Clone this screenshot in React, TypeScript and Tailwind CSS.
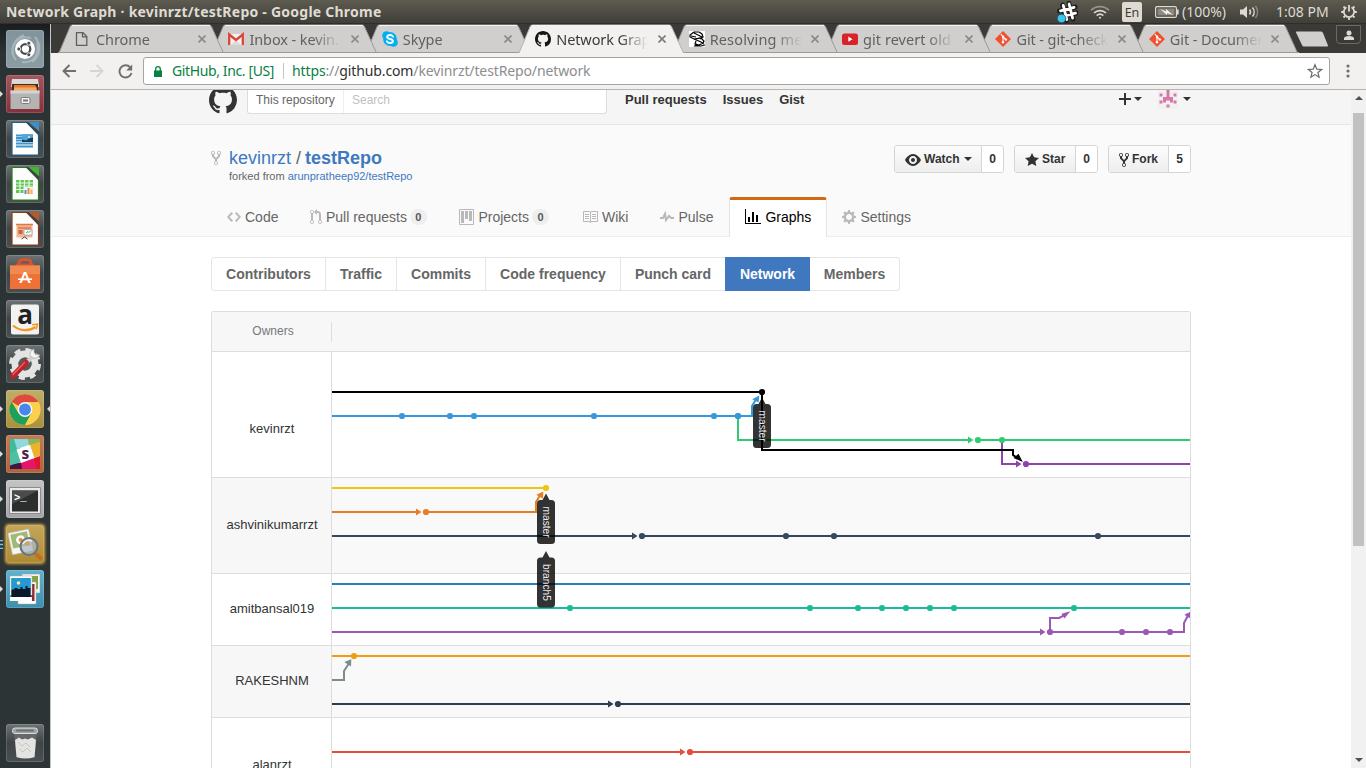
import type { ReactNode } from "react";

const UI = "font-['Noto_Sans','Open_Sans',sans-serif]";

const P = {
  fork: "M8 1a1.993 1.993 0 0 0-1 3.72V6L5 8 3 6V4.72A1.993 1.993 0 0 0 2 1a1.993 1.993 0 0 0-1 3.72V6.5l3 3v1.78A1.993 1.993 0 0 0 5 15a1.993 1.993 0 0 0 1-3.72V9.5l3-3V4.72A1.993 1.993 0 0 0 8 1zM2 4.2C1.34 4.2.8 3.65.8 3c0-.65.55-1.2 1.2-1.2.65 0 1.2.55 1.2 1.2 0 .65-.55 1.2-1.2 1.2zm3 10c-.66 0-1.2-.55-1.2-1.2 0-.65.55-1.2 1.2-1.2.65 0 1.2.55 1.2 1.2 0 .65-.55 1.2-1.2 1.2zm3-10c-.66 0-1.2-.55-1.2-1.2 0-.65.55-1.2 1.2-1.2.65 0 1.2.55 1.2 1.2 0 .65-.55 1.2-1.2 1.2z",
  eye: "M8.06 2C3 2 0 8 0 8s3 6 8.06 6C13 14 16 8 16 8s-3-6-7.94-6zM8 12c-2.2 0-4-1.78-4-4 0-2.2 1.8-4 4-4 2.22 0 4 1.8 4 4 0 2.22-1.78 4-4 4zm2-4c0 1.11-.89 2-2 2-1.11 0-2-.89-2-2 0-1.11.89-2 2-2 1.11 0 2 .89 2 2z",
  star: "M14 6l-4.9-.64L7 1 4.9 5.36 0 6l3.6 3.26L2.67 14 7 11.67 11.33 14l-.93-4.74z",
  code: "M9.5 3L8 4.5 11.5 8 8 11.5 9.5 13 14 8 9.5 3zm-5 0L0 8l4.5 5L6 11.5 2.5 8 6 4.5 4.5 3z",
  pr: "M11 11.28V5c-.03-.78-.34-1.47-.94-2.06C9.46 2.35 8.78 2.03 8 2H7V0L4 3l3 3V4h1c.27.02.48.11.69.31.21.2.3.42.31.69v6.28A1.993 1.993 0 0 0 10 15a1.993 1.993 0 0 0 1-3.72zm-1 2.92c-.66 0-1.2-.55-1.2-1.2 0-.65.55-1.2 1.2-1.2.65 0 1.2.55 1.2 1.2 0 .65-.55 1.2-1.2 1.2zM4 3c0-1.11-.89-2-2-2a1.993 1.993 0 0 0-1 3.72v6.56A1.993 1.993 0 0 0 2 15a1.993 1.993 0 0 0 1-3.72V4.72c.59-.34 1-.98 1-1.72zm-.8 10c0 .66-.55 1.2-1.2 1.2-.65 0-1.2-.55-1.2-1.2 0-.65.55-1.2 1.2-1.2.65 0 1.2.55 1.2 1.2zM2 4.2C1.34 4.2.8 3.65.8 3c0-.65.55-1.2 1.2-1.2.65 0 1.2.55 1.2 1.2 0 .65-.55 1.2-1.2 1.2z",
  project: "M10 12h3V2h-3v10zm-4-2h3V2H6v8zm-4 4h3V2H2v12zm-1 1h13V1H1v14zM14 0H1a1 1 0 0 0-1 1v14a1 1 0 0 0 1 1h13a1 1 0 0 0 1-1V1a1 1 0 0 0-1-1z",
  book: "M3 5h4v1H3V5zm0 3h4V7H3v1zm0 2h4V9H3v1zm11-5h-4v1h4V5zm0 2h-4v1h4V7zm0 2h-4v1h4V9zm2-6v9c0 .55-.45 1-1 1H9.5l-1 1-1-1H2c-.55 0-1-.45-1-1V3c0-.55.45-1 1-1h5.5l1 1 1-1H15c.55 0 1 .45 1 1zm-8 .5L7.5 3H2v9h6V3.5zm7-.5H9.5l-.5.5V12h6V3z",
  pulse: "M11.5 8L8.8 5.4 6.6 8.5 5.5 1.6 2.38 8H0v2h3.6l.9-1.8.9 5.4L9 8.5l1.6 1.5H14V8z",
  graph: "M16 14v1H0V0h1v14h15zM5 13H3V8h2v5zm4 0H7V3h2v10zm4 0h-2V6h2v7z",
  gear: "M14 8.77v-1.6l-1.94-.64-.45-1.09.88-1.84-1.13-1.13-1.81.91-1.09-.45-.69-1.92h-1.6l-.63 1.94-1.11.45-1.84-.88-1.13 1.13.91 1.81-.45 1.09L0 7.23v1.59l1.94.64.45 1.09-.88 1.84 1.13 1.13 1.81-.91 1.09.45.69 1.92h1.59l.63-1.94 1.11-.45 1.84.88 1.13-1.13-.92-1.81.47-1.09L14 8.75v.02zM7 11c-1.66 0-3-1.34-3-3s1.34-3 3-3 3 1.34 3 3-1.34 3-3 3z",
  github: "M8 0C3.58 0 0 3.58 0 8c0 3.54 2.29 6.53 5.47 7.59.4.07.55-.17.55-.38 0-.19-.01-.82-.01-1.49-2.01.37-2.53-.49-2.69-.94-.09-.23-.48-.94-.82-1.13-.28-.15-.68-.52-.01-.53.63-.01 1.08.58 1.23.82.72 1.21 1.87.87 2.33.66.07-.52.28-.87.51-1.07-1.78-.2-3.64-.89-3.64-3.95 0-.87.31-1.59.82-2.15-.08-.2-.36-1.02.08-2.12 0 0 .67-.21 2.2.82.64-.18 1.32-.27 2-.27.68 0 1.36.09 2 .27 1.53-1.04 2.2-.82 2.2-.82.44 1.1.16 1.92.08 2.12.51.56.82 1.27.82 2.15 0 3.07-1.87 3.75-3.65 3.95.29.25.54.73.54 1.48 0 1.07-.01 1.93-.01 2.2 0 .21.15.46.55.38A8.013 8.013 0 0 0 16 8c0-4.42-3.58-8-8-8z",
  plus: "M12 9H7v5H5V9H0V7h5V2h2v5h5z",
};

function Octicon({ d, w, size = 16, className = "" }: { d: string; w: number; size?: number; className?: string }) {
  return (
    <svg viewBox={`0 0 ${w} 16`} width={(w * size) / 16} height={size} className={`shrink-0 fill-current ${className}`}>
      <path fillRule="evenodd" d={d} />
    </svg>
  );
}

const Caret = ({ className = "" }: { className?: string }) => (
  <svg viewBox="0 0 8 4" className={`h-1 w-2 shrink-0 fill-current ${className}`}>
    <path d="M0 0h8L4 4z" />
  </svg>
);

/* ---------- desktop panel ---------- */

function TopPanel() {
  return (
    <div className={`flex h-6 shrink-0 items-center border-b border-[#2f2e2a] bg-linear-to-b from-[#5e5b50] to-[#3f3e39] text-[#dfdbd2] ${UI}`}>
      <div className="w-[1051px] pl-[6px] text-[14px] leading-6 font-bold tracking-[0.24px] whitespace-nowrap">
        Network Graph · kevinrzt/testRepo - Google Chrome
      </div>
      <svg viewBox="0 0 22 22" className="ml-[5px] h-[22px] w-[22px] shrink-0">
        <g transform="rotate(-14 12 11)" stroke="#1f1f1d" strokeWidth="5" strokeLinecap="round">
          <path d="M8.5 3v16M15 3v16M4 8h16M4 14h16" />
        </g>
        <g transform="rotate(-14 12 11)" stroke="#fff" strokeWidth="2.8" strokeLinecap="round">
          <path d="M9 3.500v14.500M15 3.500v14.500M5 8h14M5 14h14" />
        </g>
        <circle cx="5.500" cy="17.500" r="4.300" fill="#3cc5f1" stroke="#1d4a5c" strokeWidth=".8" />
      </svg>
      <svg viewBox="0 0 20 16" className="ml-[12px] h-4 w-5 shrink-0" fill="none" stroke="#dfdbd2" strokeWidth="1.700">
        <path d="M1 6.200a13 13 0 0 1 18 0" stroke="#96938a" />
        <path d="M4 9a8.800 8.800 0 0 1 12 0" />
        <path d="M6.700 11.600a5 5 0 0 1 6.600 0" />
        <circle cx="10" cy="13.800" r="1" fill="#dfdbd2" stroke="none" />
      </svg>
      <div className="ml-[12px] mt-px h-5 w-5 shrink-0 rounded-[2px] bg-[#dfdbd2] text-center text-[12.500px] leading-[21px] text-[#3c3b37]">En</div>
      <svg viewBox="0 0 24 14" className="ml-[13px] h-[14px] w-6 shrink-0">
        <rect x=".6" y="1.600" width="20.800" height="10.800" rx="1.500" fill="none" stroke="#dfdbd2" strokeWidth="1.200" />
        <rect x="22" y="4.500" width="1.700" height="5" fill="#dfdbd2" />
        <rect x="2.500" y="3.500" width="17" height="7" fill="#8b8980" />
        <path d="M5 4l6 2.500V4l7 6-6-1.800V10z" fill="#f4f1ea" />
      </svg>
      <div className="ml-[3px] w-[47px] shrink-0 text-[14px] leading-6 tracking-[0px] whitespace-nowrap">(100%)</div>
      <svg viewBox="0 0 20 16" className="ml-[11px] h-4 w-5 shrink-0" fill="none" stroke="#dfdbd2" strokeWidth="1.500">
        <path d="M0 5.500h3l4-3.500v12l-4-3.500H0z" fill="#dfdbd2" stroke="none" />
        <path d="M9.500 5.500a4 4 0 0 1 0 5" />
        <path d="M12.500 3.500a7 7 0 0 1 0 9" />
        <path d="M15.500 2a10 10 0 0 1 0 12" stroke="#8b8980" />
      </svg>
      <div className="ml-[16px] w-[54px] shrink-0 text-[14px] leading-6 tracking-[0px] whitespace-nowrap">1:08 PM</div>
      <svg viewBox="0 0 16 16" className="ml-[11px] h-4 w-4 shrink-0" fill="none" stroke="#dfdbd2">
        <path d="M5.500 3.300a5.200 5.200 0 1 0 5 0" strokeWidth="1.800" />
        <path d="M8 1v6.500" strokeWidth="1.800" />
        <path d="M3.900 3.900L2.500 2.500M12.100 3.900l1.400-1.400M2.200 8H.2M13.800 8h2M3.900 12.100l-1.400 1.400M12.100 12.100l1.400 1.400M8 14v2" strokeWidth="1.800" />
      </svg>
    </div>
  );
}

/* ---------- launcher ---------- */

function Doc({ color, light, children }: { color: string; light: string; children: ReactNode }) {
  return (
    <>
      <path d="M6 2.500h15l11.500 12V35H6z" fill="#fdfdfd" stroke={color} strokeWidth="1.200" />
      <path d="M22 2H33v9.500z" fill={light} />
      <path d="M19.500 2h3L33 11.500v4z" fill="#3a4144" opacity=".85" />
      {children}
    </>
  );
}

const art: Record<string, ReactNode> = {
  ubuntu: (
    <>
      <path d="M7 25C5 12 14 5 25 8M31 12c3 12-4 22-15 20M10 30C2 20 8 9 18 5M29 7c7 8 5 20-3 25" fill="none" stroke="#c9d2d6" strokeWidth="2" opacity=".5" />
      <circle cx="19" cy="19" r="10" fill="#fff" />
      <circle cx="19.500" cy="19" r="4.800" fill="none" stroke="#444c50" strokeWidth="2.300" />
      <g fill="#444c50" stroke="#fff" strokeWidth=".9">
        <circle cx="12.800" cy="19" r="2" />
        <circle cx="22.800" cy="13.200" r="2" />
        <circle cx="22.800" cy="24.800" r="2" />
      </g>
    </>
  ),
  files: (
    <>
      <path d="M6 4h26l1 8H5z" fill="#d9d9d7" />
      <path d="M6 9h26v8H6z" fill="#3e2b22" />
      <path d="M8 10h21l2 3v5H8z" fill="#e8772e" />
      <path d="M8 12.500h22V18H8z" fill="#f6a963" />
      <path d="M4.500 15.500h29V34h-29z" fill="#b4b4b2" />
      <path d="M4.500 15.500h29v3h-29z" fill="#d3d3d1" />
      <rect x="15" y="22.500" width="9" height="6" rx="1.500" fill="#f0f0ee" stroke="#7c7c7a" />
      <rect x="17" y="24.500" width="5" height="2" fill="#777" />
    </>
  ),
  writer: (
    <Doc color="#1c5f8e" light="#3f8fc6">
      <path d="M10 15.500h6M10 18h6M10 20.500h6M10 23.500h17M10 26.500h17" stroke="#3f93c8" strokeWidth="1.900" />
      <path d="M16 14.500h11V22H16z" fill="#173f5a" />
      <path d="M16 14.500h11v3l-4 1-3 2-4-1z" fill="#49a7dd" />
      <circle cx="23" cy="17" r="1" fill="#ffe9a0" />
    </Doc>
  ),
  calc: (
    <Doc color="#1d8210" light="#43b62b">
      <path d="M10 15h17v13H10z" fill="#63c552" />
      <path d="M10 18h17M10 21h17M10 24.500h17M14 15v13M18.500 15v13M23 15v13" stroke="#e9f8e6" strokeWidth="1.200" />
      <path d="M17.500 22h10v7.500h-10z" fill="#eef3f8" />
      <path d="M18.500 25h2v4h-2z" fill="#4795d6" />
      <path d="M21.500 23h2v6h-2z" fill="#f3893c" />
      <path d="M24.500 24.500h2V29h-2z" fill="#f3b53c" />
    </Doc>
  ),
  impress: (
    <Doc color="#8e3a12" light="#b65a2b">
      <path d="M10.500 14.500h16v13h-16z" fill="#f1b690" />
      <path d="M10 14.500h17M12 18h13" stroke="#dd7a49" strokeWidth="1.300" />
      <rect x="18" y="19.500" width="8" height="5.500" rx="1" fill="#fff" stroke="#8888aa" strokeWidth=".6" />
      <path d="M20 23l2-1.500 1 1 2-2" fill="none" stroke="#3aa63a" />
      <path d="M12.500 20h4v4h-4z" fill="#c8633a" />
      <path d="M15.500 29l3-2 3 2" fill="none" stroke="#444" />
    </Doc>
  ),
  software: (
    <>
      <path d="M13 9.500c0-4.500 1.500-5 6-5s6 .5 6 5" fill="none" stroke="#d9532c" strokeWidth="3" />
      <path d="M10 9.500h18" stroke="#d9532c" strokeWidth="2" />
      <path d="M4 10.500h30V34H4z" fill="#ee7137" />
      <path d="M4 10.500h30V19H4z" fill="#f08a50" />
      <text x="19" y="28" fontSize="16" fontWeight="700" textAnchor="middle" fill="#fff" fontFamily="Lato, sans-serif">A</text>
      <path d="M12 24.200h14" stroke="#fff" strokeWidth="1.600" />
    </>
  ),
  amazon: (
    <>
      <rect x="5" y="4.500" width="28" height="30" rx="2" fill="#f2f2f2" />
      <text x="19" y="23.500" fontSize="26" fontWeight="700" textAnchor="middle" fill="#222" fontFamily="Open Sans, sans-serif">a</text>
      <path d="M7 25.500c7 6 16 6 22.500 1.500" fill="none" stroke="#f6981d" strokeWidth="2.200" />
      <path d="M26 24.800l5.500-.6-1.300 5" fill="none" stroke="#f6981d" strokeWidth="1.600" />
    </>
  ),
  settings: (
    <>
      <circle cx="19" cy="19" r="10" fill="none" stroke="#e4e4e2" strokeWidth="7" />
      <circle cx="19" cy="19" r="14" fill="none" stroke="#e4e4e2" strokeWidth="4" strokeDasharray="6 5" />
      <circle cx="19" cy="19" r="6.500" fill="#555a5b" />
      <path d="M19 19L29 9" stroke="#cfcfcf" strokeWidth="4" />
      <path d="M28 4c-4 1.500-5 5-3 7.500s6 2.500 9-1.500l-4.500-.5L28 7z" fill="#f4f4f4" stroke="#aaa" strokeWidth=".8" />
      <path d="M7 31L20 17.500" stroke="#c22126" strokeWidth="5.500" strokeLinecap="round" />
      <path d="M7 29.500L18.500 17.500" stroke="#e8666a" strokeWidth="1.200" strokeLinecap="round" />
    </>
  ),
  chrome: (
    <>
      <circle cx="19" cy="19.500" r="15.500" fill="#f9ce4e" />
      <path d="M19 19.500L5.600 11.700A15.500 15.500 0 0 1 32.400 12H19z" fill="#dd4b3e" />
      <path d="M5.600 11.700A15.500 15.500 0 0 0 19 35l6.500-11.700-13 0z" fill="#1e9f5a" />
      <path d="M32.400 12H19l6.500 11.300L19 35A15.500 15.500 0 0 0 32.400 12z" fill="#fbd04c" />
      <circle cx="19" cy="19.500" r="7.400" fill="#f4f6fa" />
      <circle cx="19" cy="19.500" r="5.900" fill="#4a86ea" />
    </>
  ),
  slack: (
    <>
      <path d="M4 4h30v30H4z" fill="#fff" />
      <path d="M4 4h8l3 10-4 16H4z" fill="#3ebb9b" />
      <path d="M8 4h17l-2 6-12 4z" fill="#8fd8de" />
      <path d="M22 4h12v5l-11 3z" fill="#8bb75a" />
      <path d="M23.500 10L34 7v14l-7 2z" fill="#ecb32d" />
      <path d="M27 23.500l7-2.500v13h-4z" fill="#e01430" />
      <path d="M14 28l13-5 4 11H15z" fill="#e4156a" />
      <path d="M4 29.500l11-2 1 6.500H4z" fill="#471642" />
      <path d="M4 18l8-3 3 12-11 3.500z" fill="#4cc0a0" />
      <path d="M10.500 14.500L24 10l4.500 13L15 28z" fill="#fff" />
      <text x="19.300" y="24" fontSize="15.500" fontWeight="700" textAnchor="middle" fill="#4b1d45" fontFamily="Open Sans, sans-serif">s</text>
    </>
  ),
  terminal: (
    <>
      <path d="M3.500 7.500h31v26h-31z" fill="#e9e9e9" stroke="#8b8b8b" />
      <path d="M6 10.500h26v21H6z" fill="#2c2e2e" />
      <path d="M6 10.500h26L6 24z" fill="#4a4c4c" />
      <text x="8" y="21" fontSize="10.500" fontWeight="700" fill="#fff" fontFamily="Liberation Mono, monospace">&gt;_</text>
    </>
  ),
  viewer: (
    <>
      <g transform="rotate(-12 14 17)">
        <path d="M4 6h21v22H4z" fill="#f6f6f1" stroke="#bbb" strokeWidth=".6" />
        <path d="M6 8h17v14H6z" fill="#9fba78" />
        <circle cx="15" cy="15" r="4.500" fill="#fff" />
        <circle cx="15" cy="15" r="2" fill="#e8912c" />
      </g>
      <path d="M30 29l5 4.500" stroke="#c3701b" strokeWidth="4" strokeLinecap="round" />
      <circle cx="23" cy="21.500" r="8.500" fill="#aab8c4" fillOpacity=".75" stroke="#6f767c" strokeWidth="2.200" />
      <path d="M17 19a6.500 6.500 0 0 1 9-3" fill="none" stroke="#eef3f7" strokeWidth="1.500" />
      <path d="M18 19l3-3 4 3-3 2z" fill="#e29b48" opacity=".8" />
    </>
  ),
  photos: (
    <>
      <path d="M16 4h18v19H16z" fill="#f4f4f4" stroke="#999" strokeWidth=".5" />
      <path d="M18 6h14v13H18z" fill="#86a344" />
      <path d="M12 12h18v22H12z" fill="#fff" stroke="#aaa" strokeWidth=".5" />
      <path d="M20 14h8.500v17H20z" fill="#8c2a30" />
      <path d="M4 6h22v19H4z" fill="#fff" stroke="#aaa" strokeWidth=".5" />
      <path d="M4 24h22v1H4z" fill="#fff" />
      <path d="M5.500 8h19v19h-19z" fill="#0d4f80" />
      <path d="M5.500 8h19v11h-19z" fill="#259ad2" />
      <circle cx="12.500" cy="13" r="1.800" fill="#fbe7a0" />
      <path d="M5.500 20h3v-2h3v1h3v-2h2v2h3v-3h2v2h3v9h-19z" fill="#0a1a2a" />
      <path d="M4 27h22v4H4z" fill="#fff" />
    </>
  ),
  trash: (
    <>
      <path d="M8 8h23l-2.500 26h-18z" fill="#6d7172" opacity=".7" />
      <path d="M9 16l4-2.500 3 2 3-1 3 1 4-2 4 2.500-1.500 17q-9 3-18 0z" fill="#e3e3e1" />
      <path d="M12 18l4 4 4-3 4 4M13 25l4 3 4-4 4 4" fill="none" stroke="#c4c4c2" strokeWidth="1" />
      <rect x="6.500" y="4" width="25" height="5.500" rx="2.500" fill="#9fa3a3" stroke="#dcdcdc" />
      <rect x="10" y="5.500" width="18" height="2" rx="1" fill="#6b7071" />
    </>
  ),
};

const GREY = "bg-linear-to-b from-[#6e7375] via-[#3f4547] to-[#4a5052]";
const launcher: { id: string; bg: string; mark?: "run" | "active" | "multi" }[] = [
  { id: "ubuntu", bg: "bg-linear-to-b from-[#82949b] to-[#8b9da3]" },
  { id: "files", bg: "bg-linear-to-b from-[#a3565f] to-[#85303c]", mark: "run" },
  { id: "writer", bg: GREY },
  { id: "calc", bg: GREY },
  { id: "impress", bg: GREY },
  { id: "software", bg: GREY },
  { id: "amazon", bg: GREY },
  { id: "settings", bg: GREY },
  { id: "chrome", bg: "bg-linear-to-b from-[#bfae69] to-[#ab903b]", mark: "active" },
  { id: "slack", bg: "bg-linear-to-b from-[#bd7d59] to-[#b0633a]", mark: "run" },
  { id: "terminal", bg: "bg-linear-to-b from-[#c4c4c4] to-[#a6a6a8]", mark: "run" },
  { id: "viewer", bg: "bg-linear-to-b from-[#c4a65a] to-[#ad8a34] shadow-[0_0_3px_1px_#d5a93c]", mark: "multi" },
  { id: "photos", bg: "bg-linear-to-b from-[#5fb3cd] to-[#3d90ad]", mark: "run" },
];

function Tile({ id, bg, mark }: { id: string; bg: string; mark?: string }) {
  return (
    <div className="relative flex h-[38px] w-[50px] shrink-0 pl-[6px]">
      {(mark === "run" || mark === "active") && (
        <svg viewBox="0 0 3 6" className="absolute top-4 left-0 h-[6px] w-[3px]"><path d="M0 0l3 3-3 3z" fill="#dcdcdc" /></svg>
      )}
      {mark === "active" && (
        <svg viewBox="0 0 3 6" className="absolute top-4 right-0 h-[6px] w-[3px]"><path d="M3 0L0 3l3 3z" fill="#dcdcdc" /></svg>
      )}
      {mark === "multi" && (
        <svg viewBox="0 0 3 9" className="absolute top-[15px] left-0 h-[9px] w-[3px]"><path d="M0 .5h3M0 4.500h3M0 8.500h3" stroke="#7cc4e6" strokeWidth="1.500" /></svg>
      )}
      <div className={`h-[38px] w-[38px] rounded-[3px] inset-ring inset-ring-white/15 ${bg}`}>
        <svg viewBox="0 0 38 38" className="h-[38px] w-[38px] overflow-visible">{art[id]}</svg>
      </div>
    </div>
  );
}

function Launcher() {
  return (
    <div className="flex w-[51px] shrink-0 flex-col gap-[7px] border-r border-[#c6c8c8] bg-linear-to-b from-[#191d1f] via-[#2c3335] via-4% to-[#2d3436] pt-[6px] pb-[6px]">
      {launcher.map((t) => <Tile key={t.id} {...t} />)}
      <div className="mt-auto"><Tile id="trash" bg={GREY} /></div>
    </div>
  );
}

/* ---------- browser frame ---------- */

const GitIcon = () => (
  <svg viewBox="0 0 16 16" className="h-4 w-4">
    <path d="M8 0l8 8-8 8-8-8z" fill="#f1502f" />
    <path d="M5.800 3l2.200 2.400v5.800M8.200 6l2.600 2.500" stroke="#fff" strokeWidth="1.100" fill="none" />
    <circle cx="8" cy="11.200" r="1.200" fill="#fff" /><circle cx="8" cy="5.800" r="1.200" fill="#fff" /><circle cx="10.900" cy="8.600" r="1.200" fill="#fff" />
  </svg>
);

const tabs: { title: string; icon: ReactNode; active?: boolean; z: string; track?: string }[] = [
  {
    title: "Chrome", z: "z-[8]",
    icon: <svg viewBox="0 0 16 16" className="h-4 w-4"><path d="M1.500 1.700H8l3.800 3.800v8.800H1.500zM7.500 1.700v4.100h4.300" fill="none" stroke="#5f5f5f" strokeWidth="1.300" /></svg>,
  },
  {
    title: "Inbox - kevin.rzt", z: "z-[7]",
    icon: <svg viewBox="0 0 16 16" className="h-4 w-4"><path d="M1 3h14v11H1z" fill="#f2f2f2" /><path d="M3 14l5-5 5 5z" fill="#dcdcdc" /><path d="M1.200 14V3.500L8 9l6.800-5.500V14" fill="none" stroke="#dc4437" strokeWidth="2.300" /></svg>,
  },
  {
    title: "Skype", z: "z-[6]",
    icon: (
      <svg viewBox="0 0 16 16" className="h-4 w-4">
        <circle cx="4.500" cy="4.500" r="4.300" fill="#00aff0" /><circle cx="11.500" cy="11.500" r="4.300" fill="#00aff0" /><circle cx="8" cy="8" r="6.900" fill="#00aff0" />
        <path d="M11 5.600C10.300 4.300 9.200 4 8 4c-1.600 0-2.800.7-2.800 1.900 0 2.700 5.700 1.500 5.700 4.100 0 1.200-1.200 2-2.900 2-1.500 0-2.600-.6-3.100-1.700" fill="none" stroke="#fff" strokeWidth="1.900" strokeLinecap="round" />
      </svg>
    ),
  },
  { title: "Network Graph", z: "z-[20]", active: true, icon: <Octicon d={P.github} w={16} className="text-[#151513]" /> },
  {
    title: "Resolving merge", z: "z-[5]", track: "tracking-[0.15px]",
    icon: (
      <svg viewBox="0 0 16 16" className="h-4 w-4"><path d="M0 0h16v16H0z" fill="#fff" />
        <path d="M5 1h5l3 2 1 3-3 2M5 1L1 4v2l4 2 6-1M2 5l5 1M5 2l8 4M5 8l7 3 3 2M6 8l6-1 3 3-1 2-4 2-4-1 1-3M8 13l-2 2h6l4-1" fill="none" stroke="#000" strokeWidth="1.200" /></svg>
    ),
  },
  {
    title: "git revert old commit", z: "z-[4]", track: "tracking-[0.05px]",
    icon: <svg viewBox="0 0 16 16" className="h-4 w-4"><rect x="0" y="2.500" width="16" height="11.500" rx="2.500" fill="#d8232a" /><path d="M6.300 5.600l4.200 2.600-4.200 2.600z" fill="#fff" /></svg>,
  },
  { title: "Git - git-checkout", z: "z-[3]", icon: <GitIcon /> },
  { title: "Git - Documentation", z: "z-[2]", icon: <GitIcon /> },
];

function TabStrip() {
  return (
    <div className={`relative flex h-[29px] shrink-0 bg-[#3b3a36] pl-[7px] ${UI}`}>
      {tabs.map((t) => (
        <div key={t.title} className={`relative mr-[-13.600px] flex h-[29px] w-[167px] shrink-0 items-center pl-[17px] ${t.z}`}>
          <svg viewBox="0 0 167 29" className="absolute inset-0 h-[29px] w-[167px]">
            <path d="M1 29L12.200 2.500q.5-1.500 2-1.500h137q1.600 0 2.200 1.500L165.500 29z" fill={t.active ? "#f2f1f0" : "#d0cfcd"} />
            <path d="M1 29L12.200 2.500q.5-1.500 2-1.500h137q1.600 0 2.200 1.500L165.500 29" fill="none" stroke={t.active ? "#b5b4b2" : "#9b9a98"} strokeWidth="1" />
            {!t.active && <path d="M0 28.500h167" stroke="#9b9a98" />}
            <path d="M14 1.500h138" stroke="#f5f4f3" strokeWidth="1" />
          </svg>
          <span className="relative w-4">{t.icon}</span>
          <span className={`relative ml-[5px] w-[94px] overflow-hidden text-[14.500px] leading-[22px] whitespace-nowrap ${t.track ?? "tracking-[-0.1px]"} ${t.active ? "text-[#3b3b3b]" : "text-[#616161]"} [mask-image:linear-gradient(to_right,black_68%,transparent_98%)]`}>
            {t.title}
          </span>
          <svg viewBox="0 0 8 8" className="relative ml-[7.500px] h-2 w-2"><path d="M.5.5l7 7M7.500.5l-7 7" stroke={t.active ? "#7b7b7b" : "#8a8a8a"} strokeWidth="1.600" /></svg>
        </div>
      ))}
      <svg viewBox="0 0 34 16" className="ml-[10px] mt-[7px] h-4 w-[34px] shrink-0"><path d="M1.500.5h24.500q1.500 0 2 1.500l5 12.500q.3 1-1 1H9q-1.500 0-2-1.500L1 1.500q0-1 .5-1z" fill="#d0cfcd" /></svg>
      <div className="mt-px ml-[7px] flex h-[19px] w-[25px] items-center justify-center rounded-b-[4px] border border-[#6b6a66] bg-[#3a3935]">
        <svg viewBox="0 0 10 10" className="h-[10px] w-[10px]" fill="#dcdad6"><circle cx="5" cy="3" r="2.500" /><path d="M0 10V8q1-2 5-2t5 2v2z" /></svg>
      </div>
    </div>
  );
}

function Toolbar() {
  return (
    <div className={`flex h-[37px] shrink-0 items-center border-b border-[#b6b4b2] bg-[#f2f1f0] pl-[11px] ${UI}`}>
      <svg viewBox="0 0 14 14" className="h-[14px] w-[14px]"><path d="M14 7H1.500M7.500 1L1.500 7l6 6" fill="none" stroke="#6f6f6f" strokeWidth="1.900" /></svg>
      <svg viewBox="0 0 14 14" className="ml-[14px] h-[14px] w-[14px]"><path d="M0 7h12.500M6.500 1l6 6-6 6" fill="none" stroke="#d6d5d4" strokeWidth="1.900" /></svg>
      <svg viewBox="0 0 15 15" className="ml-[14px] h-[15px] w-[15px]"><path d="M12.200 3.300A6.100 6.100 0 1 0 13.500 9" fill="none" stroke="#6f6f6f" strokeWidth="1.900" /><path d="M14.200.5v6H8.200z" fill="#6f6f6f" /></svg>
      <div className="ml-[10px] flex h-7 w-[1187px] items-center rounded-[3px] border border-[#a5a4a2] bg-white pl-[10px] text-[14px] leading-7 whitespace-nowrap">
        <svg viewBox="0 0 8 11" className="h-[11px] w-2"><path d="M0 4.500h8V11H0z" fill="#0b8043" /><path d="M1.700 5V3a2.300 2.300 0 0 1 4.600 0v2" fill="none" stroke="#0b8043" strokeWidth="1.300" /></svg>
        <span className="ml-[10px] w-[111px] tracking-[-0.380px] text-[#0b8043]">GitHub, Inc. [US]</span>
        <span className="h-4 w-px bg-[#c4c4c4]" />
        <span className="ml-2 flex-1 tracking-[-0.120px] text-[#8d8d8d]">
          <span className="text-[#0b8043]">https</span>://<span className="text-[#303030]">github.com</span>/kevinrzt/testRepo/network
        </span>
        <svg viewBox="0 0 16 16" className="mr-[6px] h-4 w-4"><path d="M8 1.700l1.800 4.500 4.800.3-3.700 3 1.200 4.700L8 11.600l-4.100 2.600 1.200-4.700-3.700-3 4.800-.3z" fill="none" stroke="#6a6a6a" strokeWidth="1.200" /></svg>
      </div>
      <svg viewBox="0 0 4 14" className="ml-[16px] h-[14px] w-1" fill="#6f6f6f"><circle cx="2" cy="2" r="1.600" /><circle cx="2" cy="7" r="1.600" /><circle cx="2" cy="12" r="1.600" /></svg>
    </div>
  );
}

/* ---------- page ---------- */

function SiteHeader() {
  return (
    <header className="flex h-[35px] items-start overflow-hidden border-b border-[#e5e5e5] bg-[#f5f5f5] pl-[158px]">
      <Octicon d={P.github} w={16} size={28} className="-mt-[4px] text-[#333]" />
      <div className="ml-[10px] flex h-6 w-[360px] shrink-0 rounded-b-[3px] border border-t-0 border-[#ddd] bg-white text-xs leading-[20px]">
        <span className="w-24 border-r border-[#eee] pl-2 text-[#666]">This repository</span>
        <span className="pl-2 text-[#bfbfbf]">Search</span>
      </div>
      <nav className="ml-[18px] flex w-[494px] gap-4 text-[13px] leading-[20px] font-bold text-[#333]">
        <a>Pull requests</a><a>Issues</a><a>Gist</a>
      </nav>
      <div className="flex h-[18px] items-center text-[#333]">
        <Octicon d={P.plus} w={12} />
        <Caret className="ml-[3px]" />
        <svg viewBox="0 0 20 20" className="ml-[16px] h-5 w-5"><path d="M0 0h20v20H0z" fill="#f0f0f0" /><path d="M8.500 1h3v8h-3zM1.500 4.500h3v3h-3zM15.500 4.500h3v3h-3zM5 8h10v3.500H5zM1.500 11.500h3v3h-3zM15.500 11.500h3v3h-3zM5 11h3v2.500H5zM12 11h3v2.500h-3zM8.500 15.500h3v3h-3z" fill="#d778a6" /></svg>
        <Caret className="ml-[5px]" />
      </div>
    </header>
  );
}

function SocialButton({ icon, label, count, width, caret }: { icon: ReactNode; label: string; count: string; width: string; caret?: boolean }) {
  return (
    <div className={`flex h-7 ${width} rounded-[3px] border border-[#d5d5d5] text-xs leading-[26px] font-bold text-[#333]`}>
      <div className="flex flex-1 items-center rounded-l-[2px] border-r border-[#d5d5d5] bg-linear-to-b from-[#fcfcfc] to-[#eee] pl-[10px]">
        {icon}<span className="ml-[3px]">{label}</span>{caret && <Caret className="ml-1" />}
      </div>
      <div className="w-[21px] rounded-r-[2px] bg-white text-center">{count}</div>
    </div>
  );
}

function RepoTab({ icon, label, count, margin }: { icon: ReactNode; label: string; count?: string; margin: string }) {
  return (
    <a className={`flex h-10 items-center text-sm leading-5 text-[#666] ${margin}`}>
      <span className="text-[#b9b9b9]">{icon}</span>
      <span className="ml-1">{label}</span>
      {count && <span className="ml-[3px] flex h-4 w-[17px] items-center justify-center rounded-full bg-[#eee] text-[11px] font-bold text-[#555]">{count}</span>}
    </a>
  );
}

function RepoHead() {
  return (
    <div className="h-28 border-b border-[#eee] bg-[#fafafa] pt-5 pl-40">
      <div className="flex h-[52px]">
        <Octicon d={P.fork} w={10} className="mt-[5px] text-[#b5b5b5]" />
        <div className="ml-2 w-[665px]">
          <div className="text-[18px] leading-[27px] text-[#4078c0]">
            <a>kevinrzt</a> <span className="text-[#666]">/</span><a className="ml-1 font-bold">testRepo</a>
          </div>
          <div className="-mt-[2px] text-[11px] leading-[13px] text-[#666]">forked from <a className="text-[#4078c0]">arunpratheep92/testRepo</a></div>
        </div>
        <div className="flex gap-[10px]">
          <SocialButton width="w-[110px]" icon={<Octicon d={P.eye} w={16} className="mt-[2px]" />} label="Watch" count="0" caret />
          <SocialButton width="w-[84px]" icon={<Octicon d={P.star} w={14} className="mt-[2px]" />} label="Star" count="0" />
          <SocialButton width="w-[83px]" icon={<Octicon d={P.fork} w={10} className="mt-[2px]" />} label="Fork" count="5" />
        </div>
      </div>
      <nav className="flex h-10">
        <RepoTab margin="ml-4" icon={<Octicon d={P.code} w={14} />} label="Code" />
        <RepoTab margin="ml-[31.500px]" icon={<Octicon d={P.pr} w={12} />} label="Pull requests" count="0" />
        <RepoTab margin="ml-[32.500px]" icon={<Octicon d={P.project} w={15} />} label="Projects" count="0" />
        <RepoTab margin="ml-[33px]" icon={<Octicon d={P.book} w={16} />} label="Wiki" />
        <RepoTab margin="ml-[32px]" icon={<Octicon d={P.pulse} w={14} />} label="Pulse" />
        <a className="ml-[16px] flex h-10 w-[98px] items-center rounded-t-[3px] border-x border-t-[3px] border-x-[#e5e5e5] border-t-[#d26911] bg-white pb-[3px] pl-[15px] text-sm text-black">
          <Octicon d={P.graph} w={16} /><span className="ml-1">Graphs</span>
        </a>
        <RepoTab margin="ml-[15px]" icon={<Octicon d={P.gear} w={14} />} label="Settings" />
      </nav>
    </div>
  );
}

const sub = [
  ["Contributors", "w-[115px]"], ["Traffic", "w-[71px]"], ["Commits", "w-[89px]"], ["Code frequency", "w-[135px]"],
  ["Punch card", "w-[104px]"], ["Network", "w-[85px]"], ["Members", "w-[90px]"],
];

function SubNav() {
  return (
    <nav className="flex h-[34px] w-[689px] text-sm leading-[32px] font-bold text-[#666]">
      {sub.map(([label, w], i) => {
        const cls =
          label === "Network" ? "border-y border-[#4078c0] bg-[#4078c0] text-white"
            : i === 0 ? "rounded-l-[3px] border border-[#e5e5e5]"
              : label === "Members" ? "rounded-r-[3px] border border-l-0 border-[#e5e5e5]"
                : label === "Punch card" ? "border-y border-[#e5e5e5]"
                  : "border border-l-0 border-[#e5e5e5]";
        return <a key={label} className={`${w} text-center ${cls}`}>{label}</a>;
      })}
    </nav>
  );
}

const owners = [
  { name: "kevinrzt", cls: "h-[126px] pt-[28px] bg-white" },
  { name: "ashvinikumarrzt", cls: "h-24 pb-[2px] bg-[#f7f7f7]" },
  { name: "amitbansal019", cls: "h-[72px] pb-[2px] bg-white" },
  { name: "RAKESHNM", cls: "h-[72px] pb-[2px] bg-[#f7f7f7]" },
  { name: "alanrzt", cls: "h-24 pb-[2px] bg-white" },
];

const lanes: { c: string; y: number; dots: number[]; lines: string[]; arrows?: number[]; heads?: string[] }[] = [
  { c: "#3498db", y: 416, dots: [402, 450, 474, 594, 714, 738], lines: ["M332 416H752V406L756 399.500"], heads: ["759.300,395.500 752.200,399.300 758.600,402.500"] },
  { c: "#8e44ad", y: 464, dots: [1026], lines: ["M1002 440V464H1018", "M1026 464H1190"], arrows: [1026] },
  { c: "#2ecc71", y: 440, dots: [978, 1002], lines: ["M738 416V440H970", "M978 440H1190"], arrows: [978] },
  { c: "#000", y: 392, dots: [762], lines: ["M332 392H762V450H1013V455L1018 458.500"], heads: ["1022.800,462 1013.500,458 1018.500,453.800"] },
  { c: "#e67e22", y: 512, dots: [426], lines: ["M332 512H418", "M426 512H536V502L540 495.500"], arrows: [426], heads: ["543.300,491.500 536.300,494.800 543,498.700"] },
  { c: "#f1c40f", y: 488, dots: [546], lines: ["M332 488H546"] },
  { c: "#34495e", y: 536, dots: [642, 786, 834, 1098], lines: ["M332 536H634", "M642 536H1190"], arrows: [642] },
  { c: "#2980b9", y: 584, dots: [], lines: ["M332 584H1190"] },
  { c: "#9b59b6", y: 632, dots: [1050, 1122, 1146, 1170], lines: ["M332 632H1042", "M1050 632V618H1059L1065 615", "M1050 632H1184V623L1188 615.500"], arrows: [1050], heads: ["1070.300,611.300 1061.500,613.700 1064.500,618.500", "1191.300,611.500 1184.300,614.800 1191,619"] },
  { c: "#1abc9c", y: 608, dots: [570, 810, 858, 882, 906, 930, 954, 1074], lines: ["M332 608H1190"] },
  { c: "#7f8c8d", y: 680, dots: [], lines: ["M332 680H344V671L348.500 664"], heads: ["351.300,659.300 344.300,662 351,666.500"] },
  { c: "#f39c12", y: 656, dots: [354], lines: ["M332 656H1190"] },
  { c: "#2c3e50", y: 704, dots: [618], lines: ["M332 704H610", "M618 704H1190"], arrows: [618] },
  { c: "#e74c3c", y: 752, dots: [690], lines: ["M332 752H682", "M690 752H1190"], arrows: [690] },
];

const branchLabels = [
  { x: 762, y: 398, h: 44, t: "master" },
  { x: 546, y: 494, h: 44, t: "master" },
  { x: 546, y: 551.500, h: 50, t: "branch5" },
];

function NetworkGraph() {
  return (
    <div className="mt-5 w-[980px] rounded-t-[3px] border border-b-0 border-[#ddd]">
      <div className="flex h-10 items-center border-b border-[#ddd] bg-[#f7f7f7]">
        <div className="flex h-5 w-[120px] items-center justify-center border-r border-[#ddd] text-xs text-[#777]">
          <span className="mt-[-1px] mr-[-3px]">Owners</span>
        </div>
      </div>
      <div className="flex">
        <div className="w-[120px] border-r border-[#ddd] text-[13px] text-[#333]">
          {owners.map((o) => (
            <div key={o.name} className={`flex items-center justify-center border-b border-[#ddd] pl-px ${o.cls}`}>{o.name}</div>
          ))}
        </div>
        <svg viewBox="332 352 858 416" width="858" height="416" className="block">
          <path d="M332 478h858v95H332zM332 646h858v71H332z" fill="#f9f9f9" />
          <path d="M332 477.500h858M332 573.500h858M332 645.500h858M332 717.500h858" stroke="#ddd" />
          {lanes.map((l) => (
            <g key={l.y} fill={l.c}>
              {l.lines.map((d) => <path key={d} d={d} fill="none" stroke={l.c} strokeWidth="2" />)}
              {l.arrows?.map((x) => <path key={x} d={`M${x - 10} ${l.y - 3.4}l5.500 3.400-5.500 3.400z`} />)}
              {l.heads?.map((p) => <polygon key={p} points={p} />)}
              {l.dots.map((x) => <circle key={x} cx={x} cy={l.y} r="3.100" />)}
            </g>
          ))}
          <circle cx="738" cy="416" r="3.100" fill="#3498db" />
          {branchLabels.map((b) => (
            <g key={`${b.x}-${b.y}`}>
              <path
                d={`M${b.x} ${b.y - 0.5}l3.500 6.500h2q3.500 0 3.500 3.500V${b.y + 6 + b.h - 3.500}q0 3.500-3.500 3.500h-11q-3.500 0-3.500-3.500V${b.y + 9.500}q0-3.500 3.500-3.500h2z`}
                fill="#000" fillOpacity=".8"
              />
              <text transform={`translate(${b.x - 3} ${b.y + 12.500}) rotate(90)`} fontSize="10.200" fill="#fff" fillOpacity=".92" fontFamily="Liberation Sans, sans-serif">{b.t}</text>
            </g>
          ))}
        </svg>
      </div>
    </div>
  );
}

function Scrollbar() {
  return (
    <div className="flex w-[15px] shrink-0 flex-col items-center bg-[#f1f1f1]">
      <svg viewBox="0 0 8 4" className="mt-[6px] h-1 w-2"><path d="M0 4h8L4 0z" fill="#505050" /></svg>
      <div className="mt-[13px] h-[433px] w-[11px] bg-[#c1c1c1]" />
      <svg viewBox="0 0 8 4" className="mt-auto mb-[6px] h-1 w-2"><path d="M0 0h8L4 4z" fill="#505050" /></svg>
    </div>
  );
}

export default function App() {
  return (
    <div className="flex h-[768px] w-[1366px] flex-col overflow-hidden bg-white font-['Liberation_Sans',Arial,sans-serif]">
      <TopPanel />
      <div className="flex min-h-0 flex-1">
        <Launcher />
        <div className="flex min-w-0 flex-1 flex-col">
          <TabStrip />
          <Toolbar />
          <div className="flex min-h-0 flex-1">
            <main className="flex-1 overflow-hidden">
              <SiteHeader />
              <RepoHead />
              <div className="pt-5 pl-40">
                <SubNav />
                <NetworkGraph />
              </div>
            </main>
            <Scrollbar />
          </div>
        </div>
      </div>
    </div>
  );
}
